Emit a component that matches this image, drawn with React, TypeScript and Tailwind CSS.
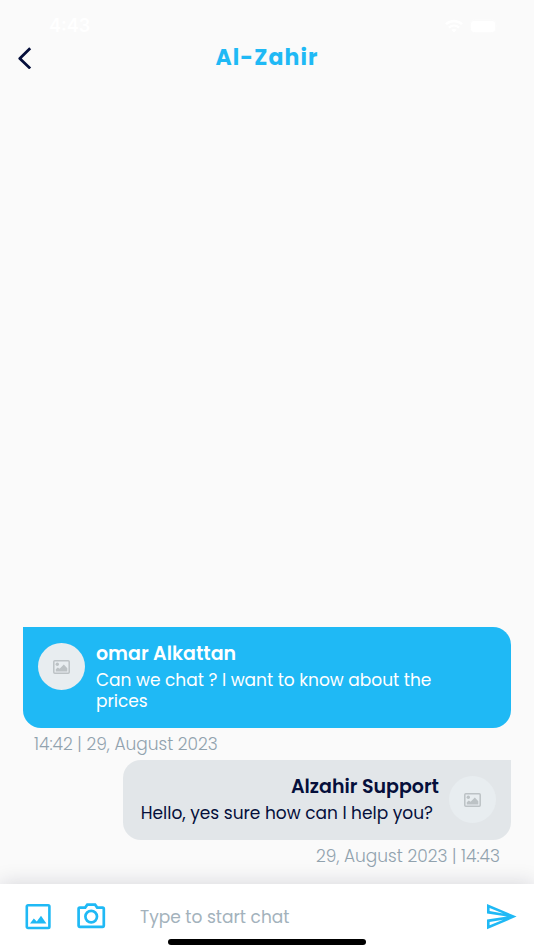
import { useState } from "react";
import type { FormEvent } from "react";
import clsx from "clsx";

type Message = {
  id: number;
  author: string;
  text: string;
  stamp: string;
  mine: boolean;
};

const messages: Message[] = [
  {
    id: 1,
    author: "omar Alkattan",
    text: "Can we chat ? I want to know about the prices",
    stamp: "14:42 | 29, August 2023",
    mine: false,
  },
  {
    id: 2,
    author: "Alzahir Support",
    text: "Hello, yes sure how can I help you?",
    stamp: "29, August 2023 | 14:43",
    mine: true,
  },
];

function StatusBar() {
  return (
    <div className="flex h-10 items-center justify-between pt-3 pr-9 pl-[49px] text-white">
      <span className="font-['Inter',sans-serif] text-lg leading-6 font-semibold">4:43</span>
      <div className="flex items-center gap-1.5">
        <svg width="20" height="14" viewBox="0 0 20 14" fill="none" stroke="currentColor" strokeWidth="2.4" aria-hidden="true">
          <path d="M2 5.2C6.6.9 13.4.9 18 5.2M5 8.6c2.9-2.6 7.1-2.6 10 0" />
          <path d="M10 13.4 7.4 10.8c1.5-1.2 3.7-1.2 5.2 0Z" fill="currentColor" stroke="none" />
        </svg>
        <svg width="28" height="14" viewBox="0 0 28 14" fill="currentColor" aria-hidden="true">
          <rect x="1" y="2" width="24" height="11" rx="3" />
          <rect x=".5" y=".5" width="25" height="13" rx="4" fill="none" stroke="currentColor" strokeOpacity=".3" />
          <path d="M26.5 5v4c1.3-.5 1.3-3.5 0-4Z" opacity=".4" />
        </svg>
      </div>
    </div>
  );
}

function Header() {
  return (
    <header className="grid h-9 grid-cols-[48px_1fr_48px] items-center">
      <button type="button" aria-label="Back" className="flex h-9 items-center pl-[18px] text-[#050f3b]">
        <svg width="14" height="22" viewBox="0 0 14 22" fill="none" stroke="currentColor" strokeWidth="2.8" strokeLinejoin="round">
          <path d="M12.2 1.2 1.8 11.4 12.2 21.4" />
        </svg>
      </button>
      <h1 className="text-center text-[22px] leading-8 font-bold tracking-wider text-[#1fb9f5]">Al-Zahir</h1>
    </header>
  );
}

function Avatar() {
  return (
    <div className="flex size-[47px] shrink-0 items-center justify-center rounded-full bg-[#e8edf0] text-[#bcc2c5]">
      <svg width="17" height="14" viewBox="0 0 17 14" fill="none" aria-hidden="true">
        <rect x=".8" y=".8" width="15.4" height="12.4" rx="1" stroke="currentColor" strokeWidth="1.5" />
        <circle cx="4.3" cy="4.2" r="1.7" fill="currentColor" />
        <path d="M2.8 11.5V9.3l2-1.8 1.8 1.3 4.2-4.4 3.5 3.9v3.2Z" fill="currentColor" />
      </svg>
    </div>
  );
}

function Bubble({ message }: { message: Message }) {
  const { mine } = message;

  return (
    <li className={clsx("flex flex-col", mine ? "items-end" : "items-stretch")}>
      <div
        className={clsx(
          "flex",
          mine
            ? "min-h-20 flex-row-reverse gap-2.5 rounded-[18px] rounded-tr-none bg-[#e2e6e9] pt-4 pr-[15px] pb-3 pl-[18px] text-[#050f3b]"
            : "min-h-[101px] gap-[11px] rounded-[18px] rounded-tl-none bg-[#1fb9f5] px-[15px] pt-4 pb-3 text-white"
        )}
      >
        <Avatar />
        <div className={clsx(mine ? "text-right" : "pr-8")}>
          <p className="text-[19px] leading-[22px] font-semibold">{message.author}</p>
          <p className={clsx("mt-[5px] text-[17px] leading-[21px]", mine && "pr-1.5")}>{message.text}</p>
        </div>
      </div>
      <time className="px-[11px] pt-1 text-[17px] leading-6 font-light text-[#91a2ae]">{message.stamp}</time>
    </li>
  );
}

function Composer() {
  const [draft, setDraft] = useState("");

  const handleSubmit = (e: FormEvent) => {
    e.preventDefault();
    setDraft("");
  };

  return (
    <footer className="bg-white shadow-[0_0_20px_rgba(20,20,50,0.16)]">
      <form onSubmit={handleSubmit} className="flex h-[55px] items-center pt-2.5 pr-4 pl-6 text-[#1fb9f5]">
        <button type="button" aria-label="Attach image">
          <svg width="28" height="28" viewBox="0 0 28 28" fill="none">
            <rect x="2.8" y="2.2" width="22.6" height="22.8" rx="1.2" stroke="currentColor" strokeWidth="2.6" />
            <path d="M6 20.6 9.8 15.6l3 3 4.2-5.8 5.4 7.8Z" fill="currentColor" />
          </svg>
        </button>
        <button type="button" aria-label="Take photo" className="ml-6">
          <svg width="30" height="28" viewBox="0 0 30 28" fill="none" stroke="currentColor" strokeWidth="2.7">
            <path d="M3.8 4.6h5.4l2.1-2.9h7.8l2.1 2.9h5.4c.7 0 1.2.5 1.2 1.2v16.8c0 .7-.5 1.2-1.2 1.2H3.8c-.7 0-1.2-.5-1.2-1.2V5.8c0-.7.5-1.2 1.2-1.2Z" />
            <circle cx="15.2" cy="13.6" r="5.8" />
          </svg>
        </button>
        <input
          type="text"
          value={draft}
          onChange={(e) => setDraft(e.target.value)}
          placeholder="Type to start chat"
          aria-label="Message"
          className="ml-[34px] h-8 min-w-0 flex-1 text-[17px] text-[#050f3b] outline-none placeholder:text-[#a3b2bc]"
        />
        <button type="submit" aria-label="Send">
          <svg width="32" height="28" viewBox="0 0 32 28" fill="currentColor" fillRule="evenodd">
            <path d="M1 .9 30.6 13.6 1 26.3V16.6L21 13.6 1 10.6ZM3.6 4.9v3.2l13.6 2.4ZM3.6 22.3v-3.2l13.6-2.4Z" />
          </svg>
        </button>
      </form>
      {/* home indicator */}
      <div className="flex h-[11px] justify-center">
        <div className="h-1.5 w-[37%] rounded-full bg-black" />
      </div>
    </footer>
  );
}

export default function App() {
  return (
    <div className="flex min-h-screen flex-col bg-[#fafafa] font-['Poppins','Inter',sans-serif]">
      <StatusBar />
      <Header />
      <main className="flex flex-1 flex-col justify-end px-[23px] pb-4">
        <ul className="flex flex-col gap-1">
          {messages.map((message) => (
            <Bubble key={message.id} message={message} />
          ))}
        </ul>
      </main>
      <Composer />
    </div>
  );
}
